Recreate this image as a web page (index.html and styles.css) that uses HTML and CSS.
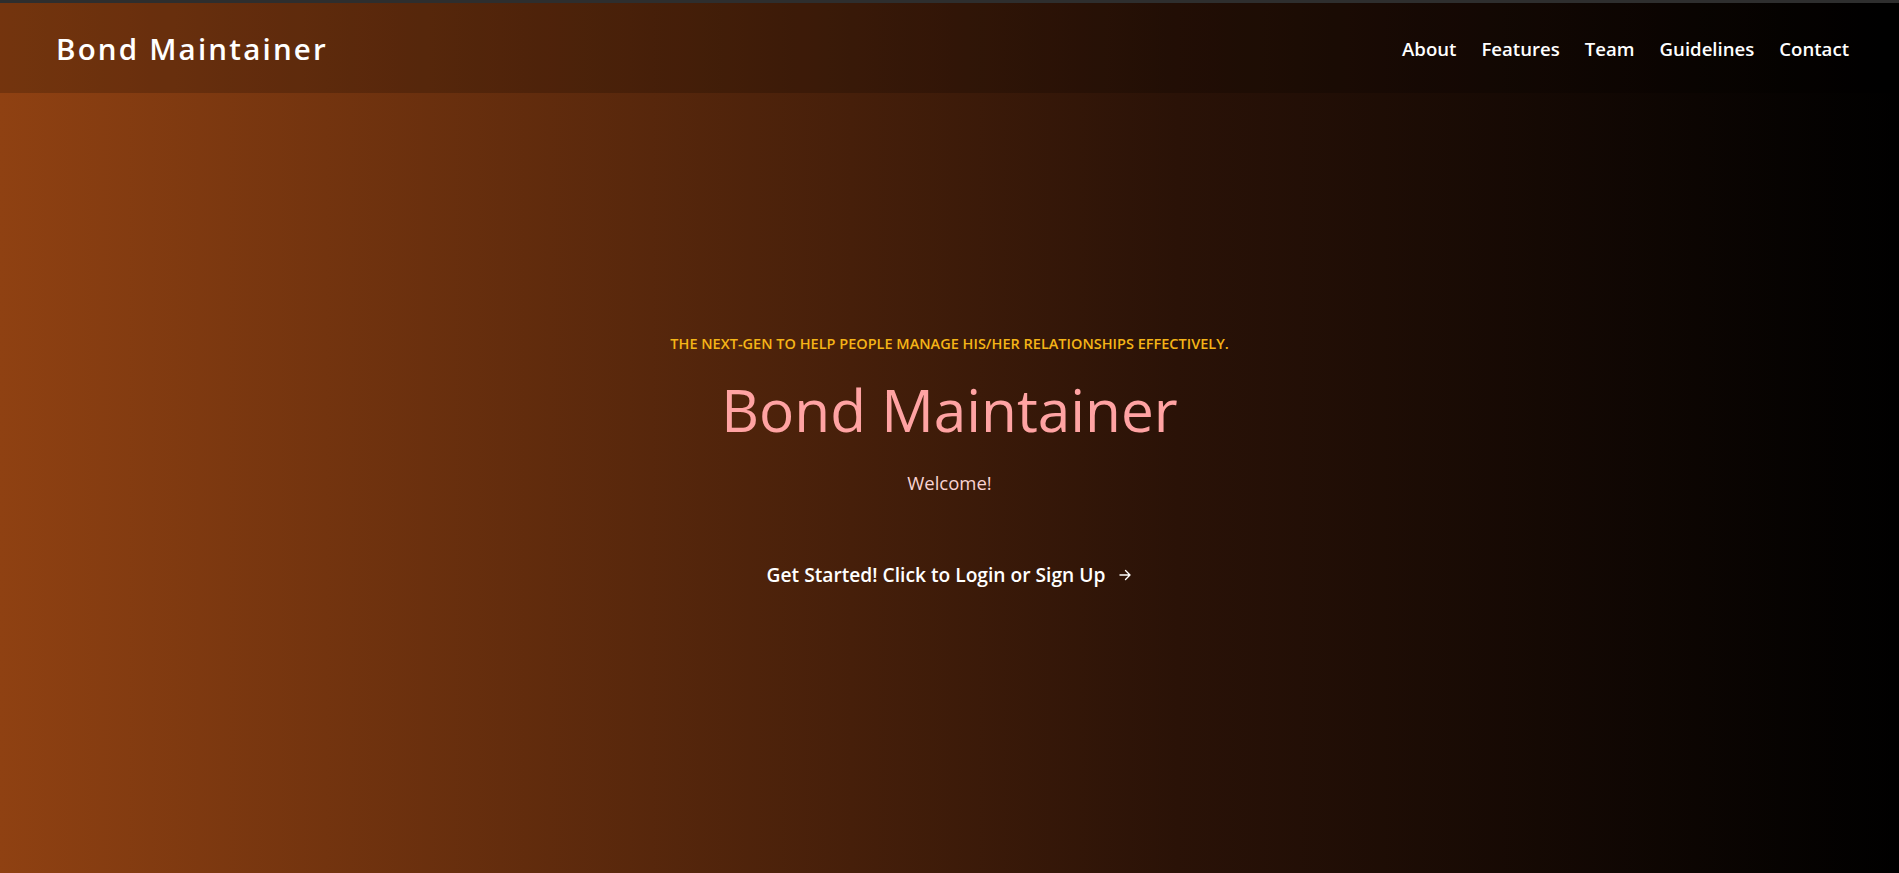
FILE: index.html
```html
<!DOCTYPE html>
<html lang="en">
<head>
<meta charset="utf-8">
<title>Bond Maintainer</title>
<link rel="stylesheet" href="styles.css">
</head>
<body>
<div class="page">
  <header class="topbar">
    <a class="logo" href="#">Bond Maintainer</a>
    <nav class="nav">
      <a href="#">About</a>
      <a href="#">Features</a>
      <a href="#">Team</a>
      <a href="#">Guidelines</a>
      <a href="#">Contact</a>
    </nav>
  </header>
  <main class="hero">
    <p class="tagline">THE NEXT-GEN TO HELP PEOPLE MANAGE HIS/HER RELATIONSHIPS EFFECTIVELY.</p>
    <h1 class="title">Bond Maintainer</h1>
    <p class="welcome">Welcome!</p>
    <a class="cta" href="#">Get Started! Click to Login or Sign Up <span class="arrow"><svg width="14" height="14" viewBox="0 0 14 14" fill="none" stroke="currentColor" stroke-width="1.4" stroke-linecap="round" stroke-linejoin="round"><path d="M2 7h10M7.5 2.5L12 7l-4.5 4.5"/></svg></span></a>
  </main>
</div>
</body>
</html>
```

FILE: styles.css
```css
* { box-sizing: border-box; }
html, body { margin: 0; padding: 0; height: 100%; }
body {
  font-family: "Open Sans", "Noto Sans", sans-serif;
  background: #000;
  color: #fff;
  overflow: hidden;
}
.page {
  height: 873px;
  border-top: 3px solid #2e2e2e;
  background: linear-gradient(to right, #8f4112 0%, #2a1207 62%, #000 100%);
  display: flex;
  flex-direction: column;
}
.topbar {
  height: 90px;
  flex: none;
  display: flex;
  align-items: center;
  justify-content: space-between;
  padding: 0 50px 0 56px;
  background: rgba(0, 0, 0, 0.19);
}
.logo {
  color: #fff;
  text-decoration: none;
  font-size: 29.5px;
  font-weight: 600;
  letter-spacing: 2.2px;
}
.nav {
  display: flex;
  gap: 25px;
}
.nav a {
  color: #fff;
  text-decoration: none;
  font-size: 18.6px;
  font-weight: 600;
}
.hero {
  flex: 1;
  display: flex;
  flex-direction: column;
  align-items: center;
  padding-top: 241px;
  text-align: center;
}
.tagline {
  margin: 0;
  color: #f5b417;
  font-size: 14.5px;
  font-weight: 600;
}
.title {
  margin: 21px 0 0;
  color: #ffa3a3;
  font-size: 58.5px;
  font-weight: 500;
  line-height: 1.2;
}
.welcome {
  margin: 26px 0 0;
  color: #f9d3d3;
  font-size: 18.5px;
}
.cta {
  margin-top: 66px;
  display: flex;
  align-items: center;
  gap: 13px;
  color: #fff;
  text-decoration: none;
  font-size: 19.2px;
  font-weight: 600;
}
.arrow { display: flex; }
```
